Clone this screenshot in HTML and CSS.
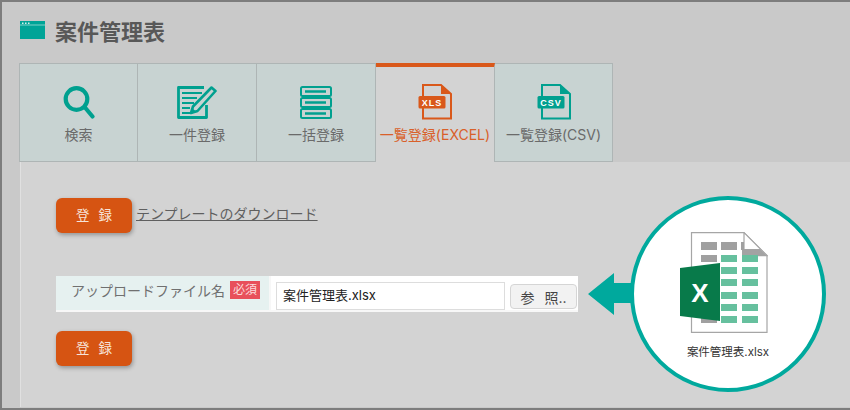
FILE: index.html
```html
<!DOCTYPE html>
<html>
<head>
    <title>案件管理表</title>
    <link rel="stylesheet" href="styles.css">
</head>
<body>
    <div class="frame">
        <div class="title-row">
            <svg width="25" height="18" viewBox="0 0 25 18">
                <rect width="25" height="18" fill="#00a497"/>
                <rect y="3.500" width="25" height="1" fill="#7fd1ca"/>
                <rect x="2" y="1.500" width="1.500" height="1.500" fill="#d5efec"/>
                <rect x="5" y="1.500" width="1.500" height="1.500" fill="#d5efec"/>
                <rect x="8" y="1.500" width="1.500" height="1.500" fill="#d5efec"/>
            </svg>
            <h1>案件管理表</h1>
        </div>

        <div class="tabs">
            <div class="tab">
                <svg width="32" height="33" viewBox="0 0 32 33" fill="none" stroke="#00a08f">
                    <circle cx="13.500" cy="13" r="10.800" stroke-width="4.200"/>
                    <path d="M22 21.500L29.500 30.500" stroke-width="4.200" stroke-linecap="round"/>
                </svg>
                <span>検索</span>
            </div>
            <div class="tab">
                <svg width="40" height="33" viewBox="0 0 40 33" fill="none" stroke="#00a08f">
                    <path d="M27 1.500H1.500v30h28V19" stroke-width="2.800" stroke-linejoin="round"/>
                    <path d="M5 7h20M5 12h15M5 17h12M5 22h8M5 27h8" stroke-width="2"/>
                    <path d="M34.500 1.500l4 3.500-18 20-6.500 2 2-6.500z" stroke-width="2.600" stroke-linejoin="round"/>
                    <path d="M14 27l1-5 4 3.500z" fill="#00a08f" stroke="none"/>
                </svg>
                <span>一件登録</span>
            </div>
            <div class="tab">
                <svg width="32" height="33" viewBox="0 0 32 33" fill="none" stroke="#00a08f" stroke-width="2">
                    <rect x="1" y="1" width="30" height="9" rx="1.500"/>
                    <rect x="1" y="12" width="30" height="9" rx="1.500"/>
                    <rect x="1" y="23" width="30" height="9" rx="1.500"/>
                    <path d="M5 5.500h21M5 16.500h21M5 27.500h21" stroke-width="2.400"/>
                </svg>
                <span>一括登録</span>
            </div>
            <div class="tab active">
                <svg class="file-icon" width="34" height="36" viewBox="0 0 34 36" fill="none">
                    <path d="M5 12V1h18l10 9v24.500H5V24" stroke="#d9581a" stroke-width="2"/>
                    <path d="M23 1v9h10z" fill="#d9581a"/>
                    <rect x="0.500" y="12" width="27" height="12.500" rx="1.500" fill="#d9581a"/>
                    <text x="14" y="21.500" class="file-label">XLS</text>
                </svg>
                <span>一覧登録(EXCEL)</span>
            </div>
            <div class="tab last">
                <svg class="file-icon" width="34" height="36" viewBox="0 0 34 36" fill="none">
                    <path d="M5 12V1h18l10 9v24.500H5V24" stroke="#00a08f" stroke-width="2"/>
                    <path d="M23 1v9h10z" fill="#00a08f"/>
                    <rect x="0.500" y="12" width="27" height="12.500" rx="1.500" fill="#00a08f"/>
                    <text x="14" y="21.500" class="file-label">CSV</text>
                </svg>
                <span>一覧登録(CSV)</span>
            </div>
        </div>

        <div class="panel">
            <div class="top-actions">
                <button class="btn-orange">登 録</button>
                <a class="template-link">テンプレートのダウンロード</a>
            </div>
            <div class="upload-row">
                <div class="upload-label">
                    <span>アップロードファイル名</span>
                    <span class="required">必須</span>
                </div>
                <div class="upload-field">
                    <div class="file-name">案件管理表.xlsx</div>
                    <button class="btn-browse">参 照..</button>
                </div>
            </div>
            <button class="btn-orange">登 録</button>
        </div>

        <!-- callout over the panel -->
        <div class="arrow"></div>
        <div class="callout">
            <svg width="88" height="101" viewBox="0 0 88 101">
                <path d="M11.500 0.600h52.500l23 23v76.800h-75.500z" fill="#fff" stroke="#a6a6a6" stroke-width="1.200"/>
                <path d="M64 0.600v23h23z" fill="#fff" stroke="#a6a6a6" stroke-width="1.200"/>
                <path d="M62 14v10h25l-7-7H64v-3z" fill="#a3a3a3"/>
                <g fill="#a0a0a0">
                    <rect x="21" y="10" width="16" height="8"/>
                    <rect x="41" y="10" width="16" height="8"/>
                    <rect x="61" y="10" width="3" height="8"/>
                    <rect x="21" y="23" width="16" height="7"/>
                    <rect x="21" y="86" width="16" height="5"/>
                </g>
                <g fill="#66c09e">
                    <rect x="41" y="23" width="16" height="7"/>
                    <rect x="62" y="23" width="16" height="7"/>
                    <rect x="41" y="35" width="16" height="7"/>
                    <rect x="62" y="35" width="16" height="7"/>
                    <rect x="41" y="47" width="16" height="7"/>
                    <rect x="62" y="47" width="16" height="7"/>
                    <rect x="41" y="60" width="16" height="7"/>
                    <rect x="62" y="60" width="16" height="7"/>
                    <rect x="41" y="72" width="16" height="7"/>
                    <rect x="62" y="72" width="16" height="7"/>
                    <rect x="41" y="84" width="16" height="7"/>
                    <rect x="62" y="84" width="16" height="7"/>
                </g>
                <path d="M0 36l40-5v58l-40-5z" fill="#087a4a"/>
                <text x="20" y="70" class="excel-x">X</text>
            </svg>
            <div class="callout-name">案件管理表.xlsx</div>
        </div>
    </div>
</body>
</html>
```

FILE: styles.css
```css
body {
    margin: 0;
    font-family: Inter, "Noto Sans CJK JP", sans-serif;
    color: #6a6a6a;
}
.frame {
    position: relative;
    box-sizing: border-box;
    width: 850px;
    height: 410px;
    padding-left: 18px;
    overflow: hidden;
    background-color: #c9c9c9;
    border: solid #7d7d7d;
    border-width: 2px 0 2px 2px;
}
.title-row {
    display: flex;
    align-items: center;
    gap: 10px;
    height: 61px;
    padding-bottom: 6px;
    box-sizing: border-box;
}
h1 {
    margin: 0;
    font-size: 22px;
    font-weight: 700;
    color: #585858;
}
.tabs {
    display: flex;
    height: 99px;
    margin-left: -1px;
}
.tab {
    box-sizing: border-box;
    width: 119px;
    display: flex;
    flex-direction: column;
    align-items: center;
    padding-top: 22px;
    background-color: #c8d3d2;
    border: solid #aeb5b5;
    border-width: 1px 1px 1px 0;
    font-size: 14px;
    white-space: nowrap;
}
.tab:first-child {
    border-left-width: 1px;
}
.tab.last {
    width: 118px;
}
.tab svg {
    flex: none;
}
.tab span {
    margin-top: 6px;
    line-height: 20px;
}
.tab .file-icon {
    margin: -2px 0 -1px;
}
.tab.active {
    padding-top: 19px;
    background-color: #d3d3d3;
    border-top: 4px solid #d9581a;
    border-bottom: none;
    color: #d9602a;
}
.file-label {
    font-family: "Liberation Sans", sans-serif;
    font-size: 9px;
    font-weight: 700;
    letter-spacing: 1px;
    fill: #fff;
    text-anchor: middle;
}
.panel {
    box-sizing: border-box;
    height: 245px;
    padding: 36px 0 0 35px;
    background-color: #d3d3d3;
    border-left: 1px solid #e0e0e0;
}
.top-actions {
    display: flex;
    align-items: flex-start;
    gap: 4px;
}
.btn-orange {
    display: block;
    width: 76px;
    height: 35px;
    padding: 0 0 3px;
    font-family: inherit;
    font-size: 13.500px;
    color: #f6e3d8;
    background-color: #d65412;
    border: none;
    border-radius: 6px;
    box-shadow: 1px 2px 4px rgba(0, 0, 0, 0.3);
    word-spacing: 5px;
}
.template-link {
    font-size: 14px;
    line-height: 31px;
    color: #5f5f5f;
    text-decoration: underline;
}
.upload-row {
    display: flex;
    width: 522px;
    height: 36px;
    margin: 43px 0 19px;
    background-color: #f7f7f7;
}
.upload-label {
    box-sizing: border-box;
    width: 213px;
    height: 34px;
    padding: 0 0 6px 15px;
    display: flex;
    align-items: center;
    gap: 5px;
    font-size: 14px;
    color: #707070;
    background-color: #e6f1f0;
}
.required {
    padding: 0 3px;
    font-size: 12px;
    line-height: 18px;
    color: #fbdcdc;
    background-color: #e8505b;
}
.upload-field {
    flex: 1;
    display: flex;
    height: 34px;
    margin-left: 2px;
    padding-left: 5px;
    background-color: #fff;
}
.file-name {
    box-sizing: border-box;
    width: 229px;
    height: 28px;
    margin-top: 6px;
    padding-left: 6px;
    font-size: 13px;
    line-height: 25px;
    color: #222;
    background-color: #fff;
    border: 1px solid #ddd;
}
.btn-browse {
    width: 67px;
    height: 25px;
    margin: 8px 0 0 5px;
    padding: 0;
    font-family: inherit;
    font-size: 14px;
    color: #444;
    background-color: #f2f2f2;
    border: 1px solid #d5d5d5;
    border-radius: 4px;
    word-spacing: 6px;
}
.arrow {
    position: absolute;
    left: 586px;
    top: 271px;
    width: 46px;
    height: 42px;
    background-color: #00a99d;
    clip-path: polygon(0 50%, 26px 0, 26px 10px, 46px 10px, 46px 30px, 26px 30px, 26px 100%);
}
.callout {
    position: absolute;
    left: 628px;
    top: 194px;
    box-sizing: border-box;
    width: 196px;
    height: 196px;
    padding-top: 32px;
    display: flex;
    flex-direction: column;
    align-items: center;
    background-color: #fff;
    border: 4px solid #00a99d;
    border-radius: 50%;
}
.callout svg {
    margin-left: -8px;
}
.excel-x {
    font-family: "Liberation Sans", sans-serif;
    font-size: 26px;
    font-weight: 700;
    fill: #fff;
    text-anchor: middle;
}
.callout-name {
    margin-top: 11px;
    font-size: 11.500px;
    line-height: 16px;
    color: #333;
}
```
